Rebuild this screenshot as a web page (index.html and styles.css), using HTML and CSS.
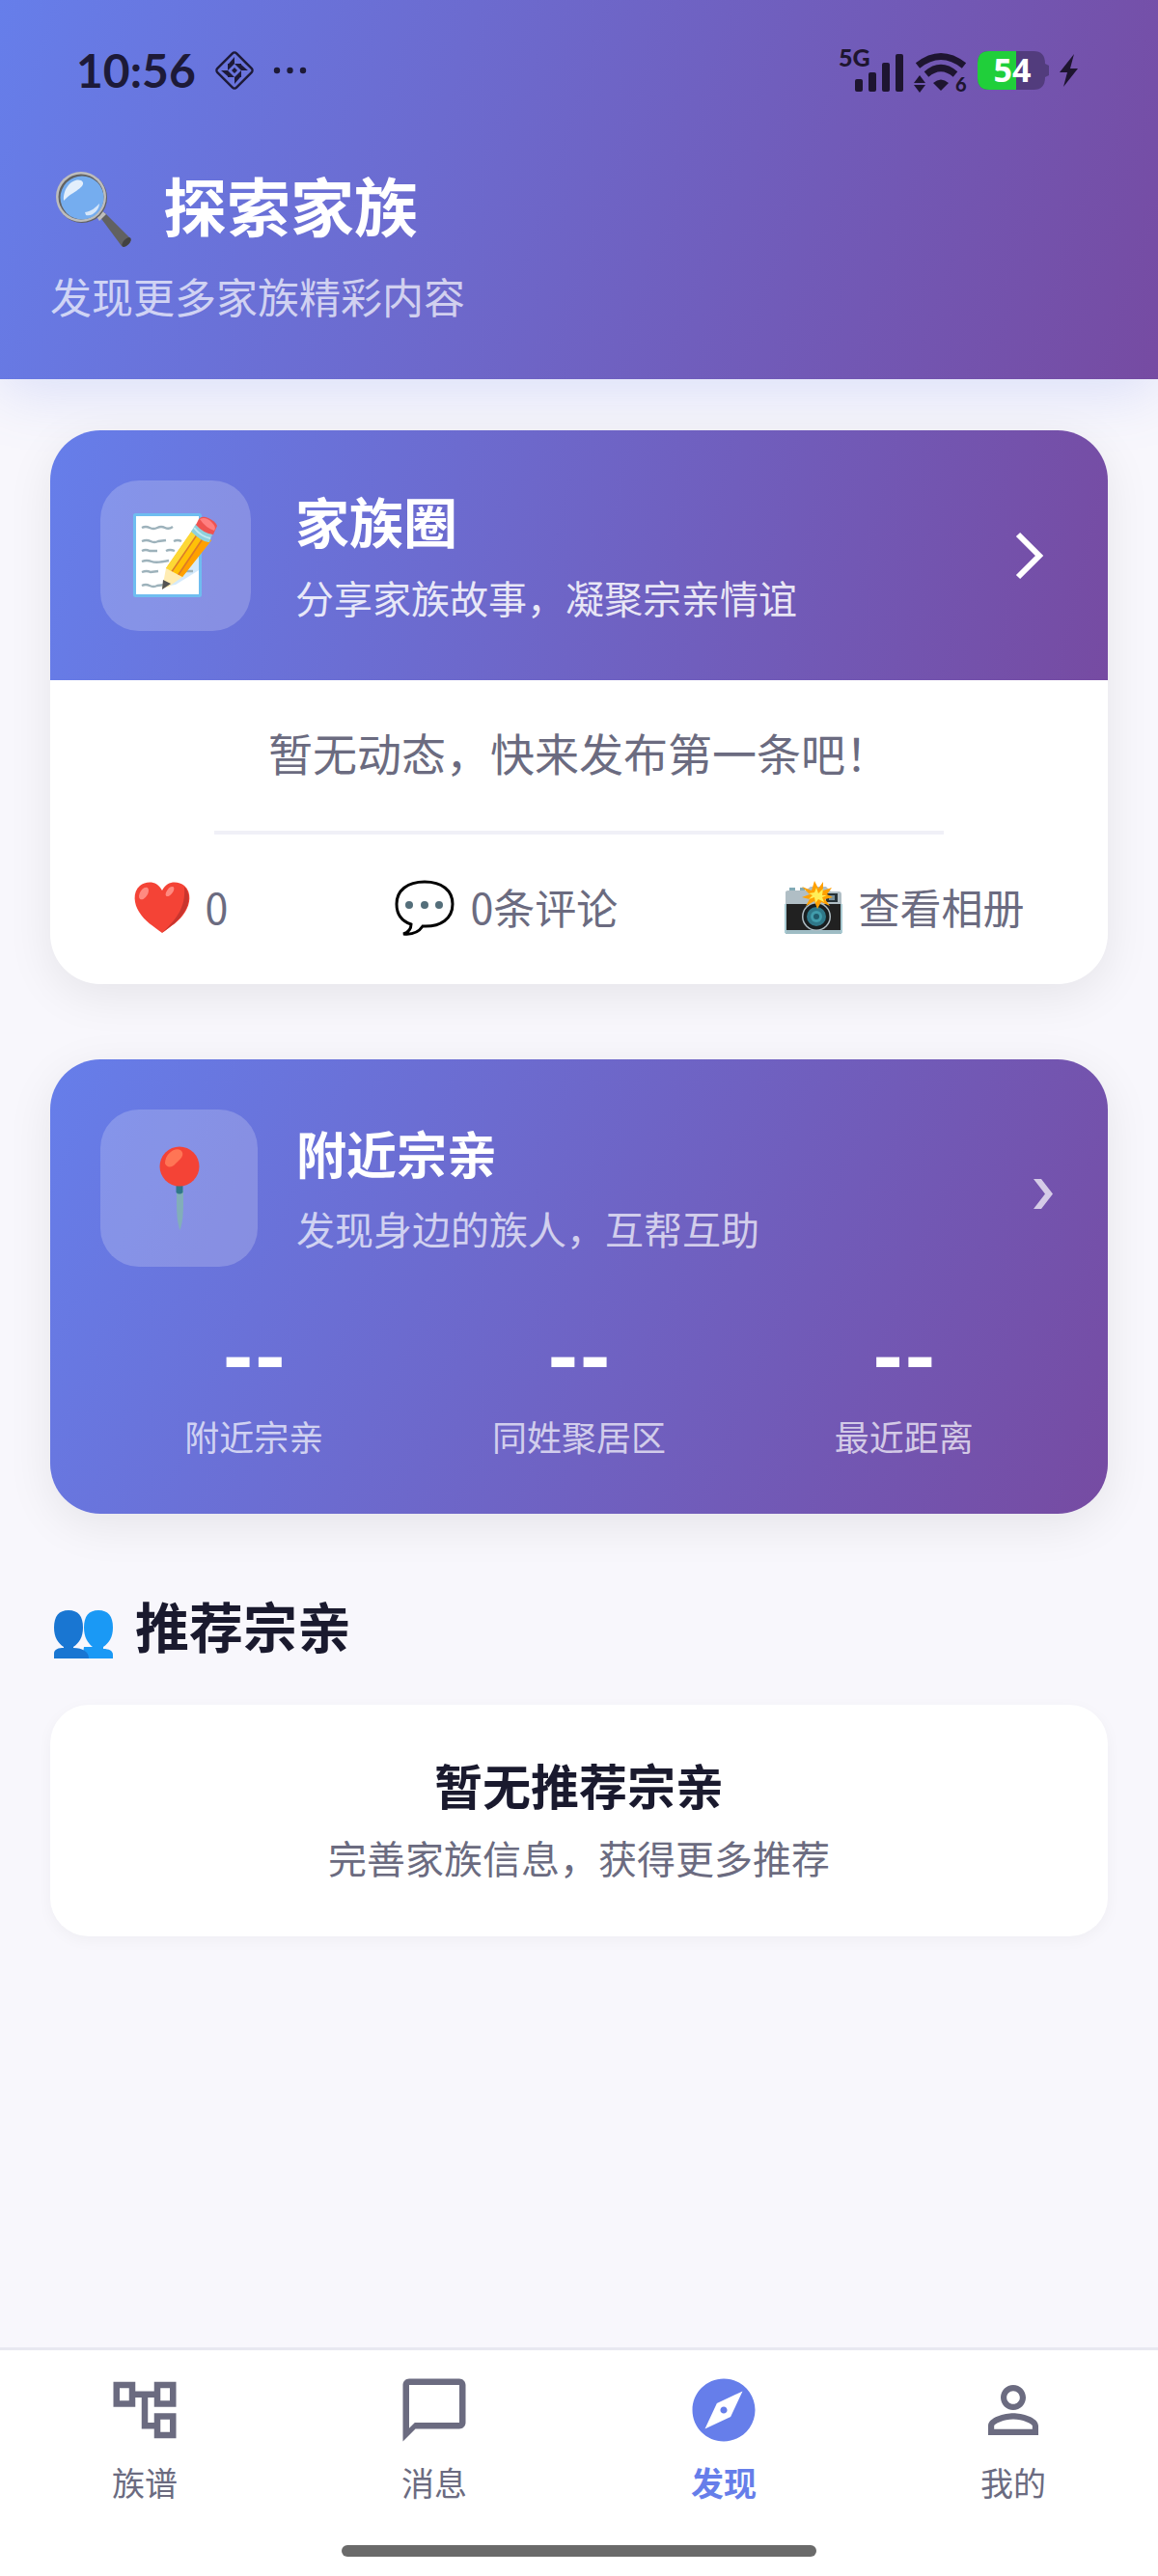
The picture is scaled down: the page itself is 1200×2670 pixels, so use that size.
FILE: index.html
```html
<!DOCTYPE html>
<html lang="zh-CN">
<head>
  <meta charset="UTF-8"/>
  <meta name="viewport" content="width=device-width, initial-scale=1"/>
  <title>探索家族</title>
  <link rel="stylesheet" href="styles.css">
</head>
<body>

  <header class="header">
    <div class="status-bar">
      <div class="status-left">
        <span class="time">10:56</span>
        <svg class="diamond" viewBox="0 0 40 40" aria-hidden="true">
          <rect x="6" y="6" width="28" height="28" rx="3" transform="rotate(45 20 20)" fill="none" stroke="currentColor" stroke-width="2.4"/>
          <path d="M20 6v7h-6zM34 20h-7v-6zM20 34v-7h6zM6 20h7v6zM20 13h7v7zM27 20v7h-7zM20 27h-7v-7zM13 20v-7h7zM20 17l3 3-3 3-3-3z" fill="currentColor"/>
        </svg>
        <svg class="dots" viewBox="0 0 36 8" aria-hidden="true">
          <circle cx="4" cy="4" r="3.2" fill="currentColor"/>
          <circle cx="17.500" cy="4" r="3.2" fill="currentColor"/>
          <circle cx="31" cy="4" r="3.2" fill="currentColor"/>
        </svg>
      </div>
      <div class="status-right">
        <svg class="signal" viewBox="0 0 68 48" aria-hidden="true">
          <text class="signal-text" x="0" y="20">5G</text>
          <g fill="currentColor">
            <rect x="17" y="33" width="8" height="13" rx="2"/>
            <rect x="31" y="26" width="8" height="20" rx="2"/>
            <rect x="45" y="16" width="8" height="30" rx="2"/>
            <rect x="59" y="7" width="8" height="39" rx="2"/>
          </g>
        </svg>
        <svg class="wifi" viewBox="0 0 56 48" aria-hidden="true">
          <path d="M4 19Q28 0 52 19" fill="none" stroke="currentColor" stroke-width="7"/>
          <path d="M13 28Q28 15 43 28" fill="none" stroke="currentColor" stroke-width="7"/>
          <path d="M20 37q8-7 16 0l-8 8z" fill="currentColor"/>
          <path d="M0 37l6-8 6 8zM0 39h12l-6 8z" fill="currentColor"/>
          <text class="wifi-text" x="43" y="46">6</text>
        </svg>
        <svg class="battery" viewBox="0 0 75 40" aria-hidden="true">
          <path d="M12 0h46q12 0 12 13l4 2v10l-4 2q0 13-12 13H12Q0 40 0 28V12Q0 0 12 0z" fill="#523c7d"/>
          <path d="M12 0h28v40H12Q0 40 0 28V12Q0 0 12 0z" fill="#20cf3a"/>
          <text class="battery-text" x="36" y="32">54</text>
        </svg>
        <svg class="bolt" viewBox="0 0 20 34" aria-hidden="true">
          <path d="M15 0L0 19h8L4 34l15-19h-8z" fill="currentColor"/>
        </svg>
      </div>
    </div>

    <h1 class="page-title">
      <svg class="icon-search" viewBox="-5 -12 88 92" aria-hidden="true">
        <path d="M46 47l5-4 27 27c3 3-5 11-9 8z" fill="#616161"/>
        <ellipse cx="74" cy="74" rx="3" ry="6" transform="rotate(42 74 74)" fill="#424242"/>
        <path d="M42 46l6-5 5 4-7 7z" fill="#bdbdbd"/>
        <circle cx="28" cy="28" r="26" fill="#616161"/>
        <circle cx="27" cy="27" r="26" fill="#bdbdbd"/>
        <circle cx="27" cy="27" r="23.500" fill="#616161"/>
        <circle cx="28" cy="28" r="22.500" fill="#75adef"/>
        <path d="M9 31C8 17 19 7 27 10c6 4-2 9-8 13-5 3-7 5-10 8z" fill="#fff" opacity=".8"/>
        <path d="M31 43c7-1 11-5 15-9 0 6-7 14-14 12z" fill="#fff" opacity=".7"/>
      </svg>
      探索家族
    </h1>
    <p class="page-subtitle">发现更多家族精彩内容</p>
  </header>

  <main class="content">

    <section class="card circle-card">
      <a class="card-head" href="#circle">
        <span class="icon-box">
          <svg class="icon-memo" viewBox="0 0 88 88" aria-hidden="true">
            <rect x="1.500" y="1.500" width="68" height="84" rx="1" fill="#fff" stroke="#6fbdf0" stroke-width="3"/>
            <path d="M68 30v29L44 74l-12 2z" fill="#d4eafc"/>
            <path d="M9 15q4-2 8 0t8 0 8 0 8-1M9 29q5-2 9 0t8 0l8-1M42 29q4-2 8 0M9 39q4-2 8 0l8 0M34 39q4-2 9 0M9 50q5-2 10 0t18-1M9 61q5-2 9 0l8-1M54 60l8 0M9 75q4-2 8 0t8 0l8-1" fill="none" stroke="#9db2bb" stroke-width="2.4"/>
            <path d="M34 57L61 18l20 10-30 38-16 5z" fill="#ffc107"/>
            <path d="M34 57L61 18l6 3-27 41z" fill="#fdd835"/>
            <path d="M45 65l27-40 9 3-30 38z" fill="#ffa000"/>
            <path d="M39 62l28-41M46 65l27-40" stroke="#dc7b28" stroke-width="1.500"/>
            <path d="M34 57l17 9-14 10-7 2z" fill="#ffecb3"/>
            <path d="M31 69l8 4-9 6z" fill="#535353"/>
            <path d="M65 11l17 11-3 8q-6 1-19-11z" fill="#8fd1dd"/>
            <path d="M63 15q7 9 17 11" fill="none" stroke="#c6eaf0" stroke-width="2"/>
            <path d="M68 6q3-4 10-1t9 8l-4 9q-10-1-18-10z" fill="#ef5350"/>
            <path d="M69 6q6-3 12 3t3 9q-9-3-15-12z" fill="#ff7f80"/>
          </svg>
        </span>
        <span class="card-text">
          <span class="card-title title-lg">家族圈</span>
          <span class="card-desc desc-bright">分享家族故事，凝聚宗亲情谊</span>
        </span>
        <svg class="chevron" viewBox="0 0 28 48" aria-hidden="true">
          <path d="M2 2l22 22L2 46" fill="none" stroke="#fff" stroke-width="6"/>
        </svg>
      </a>
      <p class="empty-text">暂无动态，快来发布第一条吧！</p>
      <hr class="divider">
      <div class="actions">
        <button class="action" type="button">
          <svg class="icon-heart" viewBox="0 0 58 54" aria-hidden="true">
            <path d="M29 9C24-2 12-1 6 4-2 11 0 23 5 31c6 10 15 15 24 22 9-7 18-12 24-22 5-8 7-20-1-27-6-5-18-6-23 5z" fill="#f44336"/>
            <path d="M52 5c7 8 5 18 0 26-6 10-14 15-23 22 13-13 25-25 23-48z" fill="#c9352e"/>
            <ellipse cx="10" cy="12" rx="4" ry="7" transform="rotate(32 10 12)" fill="#ff8a80"/>
            <ellipse cx="37" cy="10" rx="3" ry="6" transform="rotate(38 37 10)" fill="#ff8a80"/>
          </svg>
          0
        </button>
        <button class="action" type="button">
          <svg class="icon-bubble" viewBox="0 0 62 58" aria-hidden="true">
            <path d="M31 2C13 2 2 11 2 25c0 11 6 18 15 21 0 5-2 8-8 10 9 1 16-2 20-8 19 1 31-8 31-23C60 11 49 2 31 2z" fill="#fff" stroke="#000" stroke-width="3"/>
            <g fill="#546e7a">
              <circle cx="15" cy="26" r="4"/>
              <circle cx="31" cy="26" r="4"/>
              <circle cx="46" cy="26" r="4"/>
            </g>
          </svg>
          0条评论
        </button>
        <button class="action" type="button">
          <svg class="icon-camera" viewBox="0 0 60 56" aria-hidden="true">
            <rect x="5" y="7" width="6" height="6" fill="#82aab6"/>
            <rect x="16" y="7" width="5" height="6" fill="#82aab6"/>
            <path d="M1 12q0-2 3-2h18l5-4h16l5 5h8q3 0 3 3v10H1z" fill="#b0bec5"/>
            <rect x="43" y="13" width="12" height="9" fill="#263238"/>
            <rect x="46" y="15" width="6" height="5" fill="#78909c"/>
            <rect x="1" y="24" width="58" height="28" fill="#212121"/>
            <rect x="1" y="51" width="58" height="4" fill="#9ebcc4"/>
            <path d="M1 24v30M59 24v30" stroke="#a9cbd3" stroke-width="2"/>
            <circle cx="33" cy="37" r="15" fill="#b0bec5"/>
            <circle cx="33" cy="37" r="13.500" fill="#181e20"/>
            <circle cx="33" cy="37" r="10" fill="#2f7889"/>
            <circle cx="33" cy="37" r="6" fill="#419cab"/>
            <circle cx="33" cy="37" r="3" fill="#205c6d"/>
            <path d="M31 0l4 8 5-7 0 9 9-3-5 7 6 3-8 2 5 7-9-4-4 7-3-8-9 5 4-7-8-2 8-3-8-8 10 4z" fill="#ffa000"/>
            <path d="M33 7l2 6 5-5-1 7 5 0-5 2 2 5-6-3-3 4-1-6-6 2 4-4-4-2 6-1z" fill="#ffee58"/>
          </svg>
          查看相册
        </button>
      </div>
    </section>

    <a class="card nearby-card" href="#nearby">
      <span class="nearby-head">
        <span class="icon-box icon-box-lg">
          <svg class="icon-pin" viewBox="0 0 42 88" aria-hidden="true">
            <path d="M18 46h7v14q0 18-3.500 27Q18 78 18 60z" fill="#82aeb9"/>
            <path d="M17.500 40h7v8q-3.500 3-7 0z" fill="#2f7889"/>
            <circle cx="21" cy="21" r="20.500" fill="#f44336"/>
            <path d="M6 18C6 8 16 1 22 4c6 5-1 10-5 14-3 4-9 5-11 0z" fill="#ff7555"/>
          </svg>
        </span>
        <span class="card-text">
          <span class="card-title">附近宗亲</span>
          <span class="card-desc">发现身边的族人，互帮互助</span>
        </span>
        <svg class="chevron-sm" viewBox="0 0 20 31" aria-hidden="true">
          <path d="M0 0h8l12 15.500L8 31H0l12-15.500z" fill="#fff" opacity=".7"/>
        </svg>
      </span>
      <span class="stats">
        <span class="stat"><span class="stat-value">--</span><span class="stat-label">附近宗亲</span></span>
        <span class="stat"><span class="stat-value">--</span><span class="stat-label">同姓聚居区</span></span>
        <span class="stat"><span class="stat-value">--</span><span class="stat-label">最近距离</span></span>
      </span>
    </a>

    <section>
      <h2 class="section-title">
        <svg class="icon-people" viewBox="0 0 62 50" aria-hidden="true">
          <path d="M31 18C31 6 36 0 46 0s15 6 15 18c0 10-4 16-10 20v2c6 0 10 2 10 6v4H29l2-12 9 0C35 34 31 28 31 18z" fill="#1a99f5"/>
          <path d="M0 18C0 6 5 0 15 0s15 6 15 18c0 10-4 16-10 20v1c10 0 16 4 16 11H0v-5c0-5 5-6 10-6v-1C4 34 0 28 0 18z" fill="#1976d2"/>
        </svg>
        推荐宗亲
      </h2>
      <div class="recommend-card">
        <h3 class="recommend-title">暂无推荐宗亲</h3>
        <p class="recommend-desc">完善家族信息，获得更多推荐</p>
      </div>
    </section>

  </main>

  <footer class="tab-bar">
    <nav class="tabs">
      <a class="tab" href="#tree">
        <svg class="tab-icon" viewBox="0 0 24 24" aria-hidden="true">
          <path d="M22 11V3h-7v3H9V3H2v8h7V8h2v10h4v3h7v-8h-7v3h-2V8h2v3h7zM7 9H4V5h3v4zm10 6h3v4h-3v-4zm0-10h3v4h-3V5z" fill="currentColor"/>
        </svg>
        族谱
      </a>
      <a class="tab" href="#messages">
        <svg class="tab-icon" viewBox="0 0 24 24" aria-hidden="true">
          <path d="M20 2H4c-1.100 0-2 .9-2 2v18l4-4h14c1.100 0 2-.9 2-2V4c0-1.100-.9-2-2-2zm0 14H5.800L4 17.800V4h16v12z" fill="currentColor"/>
        </svg>
        消息
      </a>
      <a class="tab active" href="#discover">
        <svg class="tab-icon" viewBox="0 0 24 24" aria-hidden="true">
          <path d="M12 10.900c-.61 0-1.100.49-1.100 1.100s.49 1.100 1.100 1.100c.61 0 1.100-.49 1.100-1.100s-.49-1.100-1.100-1.100zM12 2C6.480 2 2 6.480 2 12s4.480 10 10 10 10-4.480 10-10S17.520 2 12 2zm2.190 12.190L6 18l3.810-8.190L18 6l-3.810 8.190z" fill="currentColor"/>
        </svg>
        发现
      </a>
      <a class="tab" href="#me">
        <svg class="tab-icon" viewBox="0 0 24 24" aria-hidden="true">
          <path d="M12 5.900c1.160 0 2.100.94 2.100 2.100s-.94 2.100-2.100 2.100S9.900 9.160 9.900 8s.94-2.100 2.100-2.100m0 9c2.970 0 6.100 1.460 6.100 2.100v1.100H5.900V17c0-.64 3.130-2.100 6.100-2.100M12 4C9.790 4 8 5.790 8 8s1.790 4 4 4 4-1.790 4-4-1.790-4-4-4zm0 9c-2.670 0-8 1.340-8 4v3h16v-3c0-2.660-5.330-4-8-4z" fill="currentColor"/>
        </svg>
        我的
      </a>
    </nav>
    <div class="home-indicator"></div>
  </footer>

</body>
</html>
```
FILE: styles.css
```css
* {
  box-sizing: border-box;
}

body {
  margin: 0;
  min-height: 100vh;
  display: flex;
  flex-direction: column;
  font-family: "Noto Sans CJK SC", sans-serif;
  background-color: #f8f7fc;
  color: #1a1a2e;
}

h1, h2, h3, p {
  margin: 0;
}

a {
  color: inherit;
  text-decoration: none;
}

svg {
  display: block;
  flex-shrink: 0;
  overflow: visible;
}

/* header */
.header {
  padding: 0 52px 57px;
  background: linear-gradient(108deg, #667eea 0%, #764ba2 100%);
  box-shadow: 0 12px 60px rgba(102, 126, 234, 0.2);
  color: white;
}

.status-bar {
  display: flex;
  justify-content: space-between;
  align-items: center;
  height: 146px;
  padding: 0 30px 0 27px;
  color: #1d1a38;
}

.status-left {
  display: flex;
  align-items: center;
  gap: 20px;
}

.status-right {
  display: flex;
  align-items: center;
  gap: 10px;
  color: #1e1530;
}

.time {
  font-family: Lato, sans-serif;
  font-size: 48px;
  font-weight: 700;
  line-height: 60px;
}

.diamond {
  width: 40px;
  height: 40px;
}

.dots {
  width: 36px;
  height: 8px;
}

.signal {
  width: 68px;
  height: 48px;
}

.wifi {
  width: 56px;
  height: 48px;
}

.battery {
  width: 75px;
  height: 40px;
}

.bolt {
  width: 20px;
  height: 34px;
}

.signal-text,
.wifi-text,
.battery-text {
  font-family: Lato, sans-serif;
  font-weight: 900;
  fill: currentColor;
}

.signal-text {
  font-size: 25px;
}

.wifi-text {
  font-size: 20px;
}

.battery-text {
  font-family: "Open Sans", sans-serif;
  font-size: 34px;
  font-weight: 700;
  text-anchor: middle;
  fill: white;
}

.page-title {
  display: flex;
  align-items: center;
  gap: 29px;
  margin-top: 19px;
  font-size: 66px;
  font-weight: 700;
  line-height: 80px;
}

.icon-search {
  width: 88px;
  height: 92px;
}

.page-subtitle {
  margin-top: 19px;
  font-size: 43px;
  line-height: 60px;
  color: rgba(255, 255, 255, 0.7);
}

/* cards */
.content {
  flex: 1;
  padding: 53px 52px;
}

.card {
  display: block;
  border-radius: 52px;
  overflow: hidden;
  background-color: white;
  box-shadow: 0 12px 48px rgba(0, 0, 0, 0.08);
}

.card-head {
  display: flex;
  align-items: center;
  gap: 46px;
  padding: 52px 67px 51px 52px;
  background: linear-gradient(103deg, #667eea 0%, #764ba2 100%);
  color: white;
}

.icon-box {
  display: flex;
  align-items: center;
  justify-content: center;
  flex-shrink: 0;
  width: 156px;
  height: 156px;
  border-radius: 40px;
  background-color: rgba(255, 255, 255, 0.2);
}

.icon-box-lg {
  width: 163px;
  height: 163px;
}

.icon-memo {
  width: 88px;
  height: 88px;
}

.icon-pin {
  width: 42px;
  height: 88px;
}

.card-text {
  display: flex;
  flex-direction: column;
  flex: 1;
  gap: 20px;
  padding-bottom: 4px;
}

.card-title {
  font-size: 52px;
  font-weight: 700;
  line-height: 66px;
}

.title-lg {
  font-size: 56px;
  line-height: 70px;
}

.card-desc {
  font-size: 40px;
  line-height: 50px;
  color: rgba(255, 255, 255, 0.7);
}

.desc-bright {
  color: rgba(255, 255, 255, 0.85);
}

.chevron {
  width: 28px;
  height: 48px;
}

.chevron-sm {
  width: 20px;
  height: 31px;
  margin-top: 12px;
}

.empty-text {
  padding: 44px 52px 52px;
  font-size: 46px;
  line-height: 60px;
  text-align: center;
  color: #6b6b80;
}

.divider {
  width: 69%;
  height: 4px;
  margin: 0 auto;
  border: none;
  background-color: #f0f0f7;
}

.actions {
  display: flex;
  justify-content: space-around;
  padding: 42px 0 50px;
}

.action {
  display: flex;
  align-items: center;
  gap: 16px;
  padding: 0;
  border: none;
  background: none;
  font-family: inherit;
  font-size: 43px;
  line-height: 60px;
  color: #6b6b80;
  cursor: pointer;
}

.action svg {
  margin-top: 5px;
}

.icon-heart {
  width: 58px;
  height: 54px;
}

.icon-bubble {
  width: 62px;
  height: 58px;
}

.icon-camera {
  width: 60px;
  height: 56px;
}

.nearby-card {
  margin-top: 78px;
  padding: 52px 52px 58px;
  background: linear-gradient(113deg, #667eea 0%, #764ba2 100%);
  color: white;
}

.nearby-head {
  display: flex;
  align-items: center;
  gap: 40px;
  padding-right: 5px;
}

.stats {
  display: flex;
  justify-content: space-around;
  margin-top: 54px;
}

.stat {
  display: flex;
  flex-direction: column;
  align-items: center;
  gap: 18px;
}

.stat-value {
  font-family: Inter, sans-serif;
  font-size: 70px;
  font-weight: 900;
  line-height: 80px;
}

.stat-label {
  font-size: 36px;
  line-height: 46px;
  color: rgba(255, 255, 255, 0.7);
}

/* recommended members */
.section-title {
  display: flex;
  align-items: center;
  gap: 22px;
  margin: 80px 0 48px 4px;
  font-size: 56px;
  font-weight: 700;
  line-height: 70px;
}

.icon-people {
  width: 62px;
  height: 50px;
  margin-top: 20px;
}

.recommend-card {
  padding: 52px 52px 57px;
  border-radius: 40px;
  background-color: white;
  box-shadow: 0 4px 16px rgba(0, 0, 0, 0.04);
  text-align: center;
}

.recommend-title {
  font-size: 50px;
  font-weight: 700;
  line-height: 60px;
}

.recommend-desc {
  margin-top: 21px;
  font-size: 40px;
  line-height: 50px;
  color: #6b6b80;
}

/* bottom tabs */
.tab-bar {
  padding-bottom: 20px;
  border-top: 3px solid #e8e8f0;
  background-color: white;
}

.tabs {
  display: flex;
  padding: 23px 0 43px;
}

.tab {
  display: flex;
  flex: 1;
  flex-direction: column;
  align-items: center;
  gap: 14px;
  font-size: 34px;
  line-height: 44px;
  color: #6b6b80;
}

.tab.active {
  color: #667eea;
  font-weight: 700;
}

.tab-icon {
  width: 78px;
  height: 78px;
}

.home-indicator {
  width: 41%;
  height: 12px;
  margin: 0 auto;
  border-radius: 6px;
  background-color: #6a6a6a;
}
```
